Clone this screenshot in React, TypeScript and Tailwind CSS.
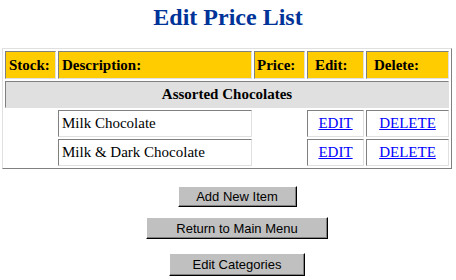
const items = [
  { id: 1, name: "Milk Chocolate" },
  { id: 2, name: "Milk & Dark Chocolate" },
];

const inset = "border border-t-[#808080] border-l-[#808080] border-r-[#e0e0e0] border-b-[#e0e0e0]";
const btn =
  "bg-[#c0c0c0] border border-t-white border-l-white border-r-black border-b-black shadow-[inset_-1px_-1px_0_#808080] text-black text-[13px] font-['Liberation_Sans',Arial,sans-serif] leading-none";

export default function App() {
  return (
    <div className="w-[456px] h-[280px] bg-white overflow-hidden font-['Liberation_Serif','Times_New_Roman',serif] text-black">
      <h1 className="pt-[3px] h-[48px] text-center text-[24px] leading-[28px] font-bold text-[#003399]">
        Edit Price List
      </h1>

      <table className="ml-[2px] w-[450px] table-fixed border-separate border-spacing-[2px] border border-t-[#e0e0e0] border-l-[#e0e0e0] border-r-[#808080] border-b-[#808080] text-[15px]">
        <colgroup>
          <col className="w-[51px]" />
          <col className="w-[194px]" />
          <col className="w-[51px]" />
          <col className="w-[57px]" />
          <col className="w-[83px]" />
        </colgroup>
        <tbody>
          <tr>
            <td className={`${inset} bg-[#ffcc00] h-[28px] pl-[3px] font-bold`}>Stock:</td>
            <td className={`${inset} bg-[#ffcc00] h-[28px] pl-[3px] font-bold`}>Description:</td>
            <td className={`${inset} bg-[#ffcc00] h-[28px] pl-[2px] font-bold`}>Price:</td>
            <td className={`${inset} bg-[#ffcc00] h-[28px] pl-[7px] font-bold`}>Edit:</td>
            <td className={`${inset} bg-[#ffcc00] h-[28px] pl-[7px] font-bold`}>Delete:</td>
          </tr>
          <tr>
            <td colSpan={5} className={`${inset} bg-[#e0e0e0] h-[27px] text-center font-bold`}>
              Assorted Chocolates
            </td>
          </tr>
          {items.map((item) => (
            <tr key={item.id}>
              <td className="h-[27px]" />
              <td className={`${inset} h-[27px] pl-[3px]`}>{item.name}</td>
              <td className="h-[27px]" />
              <td className={`${inset} h-[27px] text-center`}>
                <a href="#" className="text-[#0000ff] underline">EDIT</a>
              </td>
              <td className={`${inset} h-[27px] text-center`}>
                <a href="#" className="text-[#0000ff] underline">DELETE</a>
              </td>
            </tr>
          ))}
        </tbody>
      </table>

      <div className="flex flex-col items-center pl-[18px]">
        <button className={`${btn} mt-[17px] w-[119px] h-[21px]`}>Add New Item</button>
        <button className={`${btn} mt-[10px] w-[182px] h-[22px]`}>Return to Main Menu</button>
        <button className={`${btn} mt-[14px] w-[136px] h-[23px]`}>Edit Categories</button>
      </div>
    </div>
  );
}
